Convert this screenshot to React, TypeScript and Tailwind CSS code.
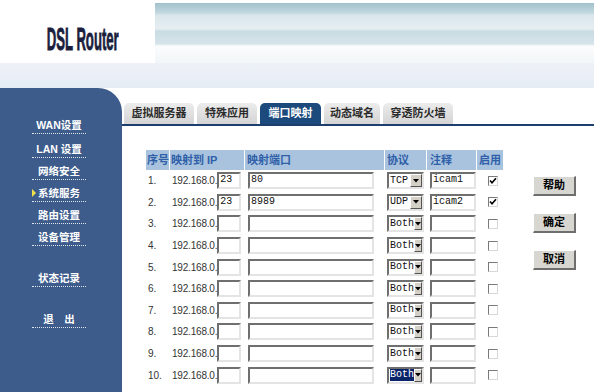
import React from "react";

const rows = [
  { n: "1.", ip: "23", port: "80", proto: "TCP", note: "icam1", on: true },
  { n: "2.", ip: "23", port: "8989", proto: "UDP", note: "icam2", on: true },
  { n: "3.", ip: "", port: "", proto: "Both", note: "", on: false },
  { n: "4.", ip: "", port: "", proto: "Both", note: "", on: false },
  { n: "5.", ip: "", port: "", proto: "Both", note: "", on: false },
  { n: "6.", ip: "", port: "", proto: "Both", note: "", on: false },
  { n: "7.", ip: "", port: "", proto: "Both", note: "", on: false },
  { n: "8.", ip: "", port: "", proto: "Both", note: "", on: false },
  { n: "9.", ip: "", port: "", proto: "Both", note: "", on: false },
  { n: "10.", ip: "", port: "", proto: "Both", note: "", on: false, sel: true },
];

const menu = [
  { label: "WAN设置", mt: "mt-0" },
  { label: "LAN 设置", mt: "mt-[2px]" },
  { label: "网络安全", mt: "mt-0" },
  { label: "系统服务", mt: "mt-0", active: true },
  { label: "路由设置", mt: "mt-0" },
  { label: "设备管理", mt: "mt-0" },
  { label: "状态记录", mt: "mt-[19px]" },
  { label: "退　出", mt: "mt-[19px]" },
];

const tabs = [
  { label: "虚拟服务器", w: "w-[70px]" },
  { label: "特殊应用", w: "w-[60px]" },
  { label: "端口映射", w: "w-[61px]", active: true },
  { label: "动态域名", w: "w-[56px]" },
  { label: "穿透防火墙", w: "w-[70px]" },
];

const cjk = "font-['Liberation_Sans','Noto_Sans_CJK_SC',sans-serif]";

const TextBox = ({ value, w }: { value: string; w: string }) => (
  <div
    className={`${w} h-[17px] shrink-0 bg-white border-2 border-t-[#6f6f6f] border-l-[#6f6f6f] border-b-[#e4e4e4] border-r-[#e4e4e4] text-[10px] leading-[12px] pl-[1px] font-['Liberation_Mono',monospace] text-[#111]`}
  >
    {value}
  </div>
);

const ProtoSelect = ({ value, sel }: { value: string; sel?: boolean }) => (
  <div className="w-[37px] h-[17px] flex bg-white border-2 border-t-[#6f6f6f] border-l-[#6f6f6f] border-b-[#e4e4e4] border-r-[#e4e4e4]">
    <div className="flex-1 flex items-center pl-[1px]">
      <span
        className={`text-[10px] leading-[12px] font-['Liberation_Mono',monospace] ${
          sel ? "bg-[#0a246a] text-white" : "text-[#111]"
        }`}
      >
        {value}
      </span>
    </div>
    <div className="w-[12px] bg-[#d4d0c8] border-t border-l border-white border-b border-r border-b-[#555] border-r-[#555] flex items-center justify-center">
      <svg width="6" height="4" viewBox="0 0 6 4">
        <path d="M0 0h6L3 3.5z" fill="#000" />
      </svg>
    </div>
  </div>
);

const CheckBox = ({ on }: { on: boolean }) => (
  <div className="w-[10px] h-[10px] bg-white border border-t-[#7a7a7a] border-l-[#7a7a7a] border-b-[#d8d8d8] border-r-[#d8d8d8] flex items-center justify-center">
    {on && (
      <svg width="8" height="8" viewBox="0 0 8 8">
        <path d="M1 3.5l2 2.2L7 1.2" stroke="#000" strokeWidth="1.6" fill="none" />
      </svg>
    )}
  </div>
);

const Button = ({ label }: { label: string }) => (
  <div className="w-[43px] h-[20px] bg-[#d7d6d1] border-t border-l border-white border-b-2 border-r-2 border-b-[#6e6e6e] border-r-[#6e6e6e] flex items-center justify-center text-[11px] font-bold text-black">
    {label}
  </div>
);

const Th = ({ w, pl, children, last }: { w: string; pl: string; children: React.ReactNode; last?: boolean }) => (
  <div className={`${w} ${pl} bg-[#a9c3de] flex items-center whitespace-nowrap ${last ? "" : "border-r border-white"}`}>
    {children}
  </div>
);

export default function App() {
  return (
    <div className={`w-[594px] h-[392px] overflow-hidden bg-white flex flex-col ${cjk}`}>
      {/* header */}
      <div className="h-[63px] flex">
        <div className="w-[155px] bg-white flex items-center justify-center pt-[14px] pl-[10px]">
          <span className="inline-block text-[32px] leading-[34px] font-bold text-[#1b1f3d] scale-x-[0.41] [-webkit-text-stroke:0.9px_#1b1f3d] whitespace-nowrap">
            DSL Router
          </span>
        </div>
        <div className="flex-1 bg-[linear-gradient(to_bottom,#ffffff_0px,#ffffff_3px,#a2c1cc_3px,#c3d8df_13px,#d9e6eb_15px,#e6eef1_29px,#c9dce3_31px,#d5e4e9_44px,#fbfcfd_46px,#f3f6f8_62px)]" />
      </div>
      <div className="h-[25px] bg-[linear-gradient(to_bottom,#eef2f7,#e5ecf4)]" />

      {/* main */}
      <div className="flex-1 flex">
        <div className="w-[122px] bg-[#3d5b8b] rounded-tr-[24px] pt-[24px] flex flex-col">
          {menu.map((m) => (
            <div key={m.label} className={`relative ml-[32px] w-[54px] h-[22px] ${m.mt} flex items-end justify-center pb-[1px] border-b border-dotted border-[#dfe5ef]`}>
              {m.active && (
                <svg className="absolute left-0 bottom-[4px]" width="4" height="8" viewBox="0 0 4 8">
                  <path d="M0 0l4 4-4 4z" fill="#f2e24a" />
                </svg>
              )}
              <span className="text-[10.5px] leading-[13px] font-bold text-white whitespace-nowrap">{m.label}</span>
            </div>
          ))}
        </div>

        <div className="flex-1 flex flex-col pt-[15px]">
          {/* tabs */}
          <div className="flex gap-[3px] pl-[2px] border-b-2 border-[#1c3f6e]">
            {tabs.map((t) => (
              <div
                key={t.label}
                className={`${t.w} h-[21px] rounded-t-[5px] flex items-center justify-center text-[11px] font-bold ${
                  t.active
                    ? "bg-[#1c4a7c] text-white"
                    : "bg-[linear-gradient(to_bottom,#ececec,#d4d4d4)] text-[#2b2b2b]"
                }`}
              >
                {t.label}
              </div>
            ))}
          </div>

          <div className="flex pl-[24px] pt-[24px]">
            {/* table */}
            <div className="flex flex-col">
              <div className="flex h-[20px] text-[11px] font-bold text-[#2f5fa8]">
                <Th w="w-[24px]" pl="pl-[1px]">序号</Th>
                <Th w="w-[75px]" pl="pl-[1px]">映射到 IP</Th>
                <Th w="w-[140px]" pl="pl-[2px]">映射端口</Th>
                <Th w="w-[42px]" pl="pl-[2px]">协议</Th>
                <Th w="w-[50px]" pl="pl-[3px]">注释</Th>
                <Th w="w-[26px]" pl="pl-[2px]" last>启用</Th>
              </div>
              {rows.map((r) => (
                <div key={r.n} className="flex h-[21.6px] items-center text-[10px] text-[#333] font-['Liberation_Sans',sans-serif]">
                  <div className="w-[24px] pl-[2px]">{r.n}</div>
                  <div className="w-[75px] pl-[2px] flex items-center whitespace-nowrap">
                    <span className="tracking-[-0.2px]">192.168.0.</span>
                    <TextBox value={r.ip} w="w-[24px]" />
                  </div>
                  <div className="w-[140px] pl-[3px]">
                    <TextBox value={r.port} w="w-[126px]" />
                  </div>
                  <div className="w-[42px] pl-[2px]">
                    <ProtoSelect value={r.proto} sel={r.sel} />
                  </div>
                  <div className="w-[50px] pl-[3px]">
                    <TextBox value={r.note} w="w-[46px]" />
                  </div>
                  <div className="w-[26px] pl-[11px]">
                    <CheckBox on={r.on} />
                  </div>
                </div>
              ))}
            </div>

            {/* buttons */}
            <div className="ml-[30px] mt-[26px] flex flex-col gap-[17px]">
              <Button label="帮助" />
              <Button label="确定" />
              <Button label="取消" />
            </div>
          </div>
        </div>
      </div>
    </div>
  );
}
